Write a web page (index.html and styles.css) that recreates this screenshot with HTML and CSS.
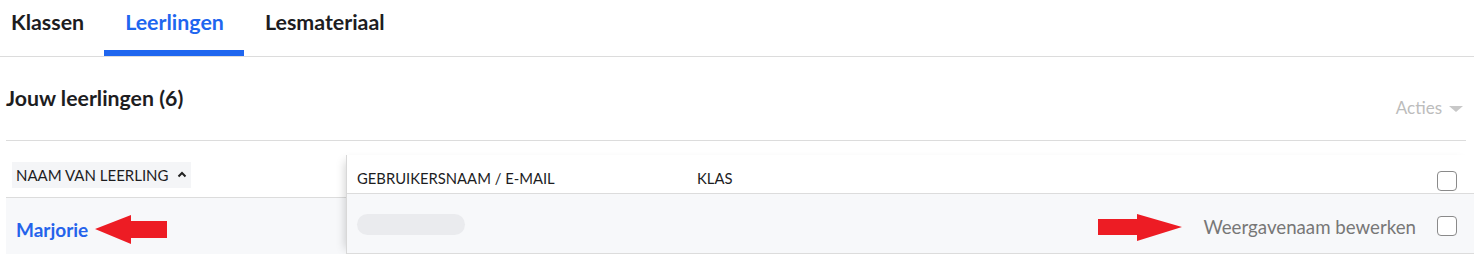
FILE: index.html
```html
<!DOCTYPE html>
<html lang="nl">
<head>
<meta charset="utf-8">
<title>Leerlingen</title>
<link rel="stylesheet" href="styles.css">
</head>
<body>
<nav class="tabs">
  <a class="tab first">Klassen</a>
  <a class="tab active">Leerlingen</a>
  <a class="tab">Lesmateriaal</a>
</nav>
<main class="page">
  <div class="head">
    <h1 class="title">Jouw leerlingen (6)</h1>
    <div class="actions">Acties <span class="caret"></span></div>
  </div>
  <div class="table">
    <div class="fixed">
      <div class="fixed-head">
        <span class="sort">NAAM VAN LEERLING
          <svg class="chev" width="10" height="7" viewBox="0 0 10 7"><path d="M1.5 5.5 L5 2 L8.5 5.5" fill="none" stroke="#222" stroke-width="2"/></svg>
        </span>
      </div>
      <div class="fixed-row">
        <a class="name">Marjorie</a>
        <svg class="arrow-left" width="72" height="29" viewBox="0 0 72 29"><polygon points="0,14 36,0 36,6 72,6 72,23 36,23 36,29" fill="#ed1c24"/></svg>
      </div>
    </div>
    <div class="scroll">
      <div class="scroll-head">
        <div class="col-user">GEBRUIKERSNAAM / E-MAIL</div>
        <div class="col-klas">KLAS</div>
        <div class="col-fill"></div>
        <span class="check"></span>
      </div>
      <div class="scroll-row">
        <div class="col-user"><span class="blur"></span></div>
        <div class="col-fill edit">
          <svg class="arrow-right" width="84" height="27" viewBox="0 0 84 27"><polygon points="0,5 39,5 39,0 84,13 39,27 39,21 0,21" fill="#ed1c24"/></svg>
          <span class="edit-text">Weergavenaam bewerken</span>
        </div>
        <span class="check"></span>
      </div>
    </div>
  </div>
</main>
</body>
</html>
```
FILE: styles.css
```css
* { box-sizing: border-box; }
html, body { margin: 0; padding: 0; background: #fff; }
body {
  font-family: Lato, "Open Sans", "Liberation Sans", sans-serif;
  color: #222;
  overflow: hidden;
}

.tabs {
  display: flex;
  height: 57px;
  border-bottom: 1px solid #dcdcdc;
}
.tab {
  display: flex;
  align-items: center;
  padding: 4px 20px 10px 21px;
  height: 56px;
  font-size: 21.4px;
  font-weight: 700;
  color: #1d1d1f;
  border-bottom: 6px solid transparent;
}
.tab.first { padding-left: 11px; padding-right: 20px; }
.tab.active {
  color: #1f66ef;
  border-bottom-color: #1f66ef;
}

.page { padding: 0 8px 0 6px; }

.head {
  display: flex;
  justify-content: space-between;
  align-items: flex-start;
  height: 84px;
  border-bottom: 1px solid #dcdcdc;
}
.title {
  margin: 28px 0 0;
  font-size: 21.3px;
  line-height: 26px;
  font-weight: 700;
  color: #1d1d1f;
}
.actions {
  margin: 41px 3px 0 0;
  font-size: 17px;
  line-height: 20px;
  color: #bcbcbc;
  display: flex;
  align-items: center;
  gap: 7px;
}
.caret {
  width: 0; height: 0;
  border-left: 7px solid transparent;
  border-right: 7px solid transparent;
  border-top: 6px solid #c8c8c8;
  margin-top: 2px;
}

.table {
  display: flex;
  margin-right: -8px;
}
.fixed { width: 340px; flex: none; }
.fixed-head {
  padding: 21px 0 0 6px;
  height: 57px;
  border-bottom: 1px solid #dcdcdc;
}
.sort {
  display: inline-flex;
  align-items: center;
  gap: 8px;
  height: 26px;
  padding: 0 4px;
  background: #f4f5f7;
  font-size: 15px;
  color: #1d1d1f;
}
.chev { margin-top: -1px; }
.fixed-row {
  display: flex;
  align-items: center;
  height: 57px;
  padding: 0 0 0 10px;
  background: #f7f8fa;
}
.name {
  font-size: 19px;
  font-weight: 700;
  color: #2563eb;
  margin-top: 5px;
}
.arrow-left { margin-left: 7px; margin-top: 5px; }

.scroll {
  flex: 1;
  margin-top: 14px;
  border-left: 1px solid #d8d8d8;
  box-shadow: -7px 0 9px -6px rgba(0,0,0,0.18);
}
.scroll-head {
  display: flex;
  align-items: center;
  height: 39px;
  border-bottom: 1px solid #dcdcdc;
  font-size: 14.8px;
  color: #1d1d1f;
  padding: 0 17px 0 10px;
}
.scroll-head .col-user, .scroll-head .col-klas { margin-top: 7px; }
.scroll-head .check { margin-top: 13px; }
.col-user { width: 340px; flex: none; }
.col-klas { width: 120px; flex: none; }
.col-fill { flex: 1; }
.check {
  width: 20px; height: 20px; flex: none;
  border: 1px solid #8a8a8a;
  border-radius: 4px;
  background: #fff;
}
.scroll-row {
  display: flex;
  align-items: center;
  height: 60px;
  border-bottom: 1px solid #dcdcdc;
  background: #f7f8fa;
  padding: 0 17px 0 10px;
}
.blur {
  display: block;
  width: 108px;
  height: 21px;
  border-radius: 11px;
  background: #eaebee;
  margin-top: 2px;
}
.edit {
  display: flex;
  justify-content: flex-end;
  align-items: center;
  gap: 21px;
  padding-right: 21px;
}
.arrow-right { margin-top: 7px; }
.edit-text {
  font-size: 18.7px;
  color: #777;
  margin-top: 6px;
}
.scroll-row .check { margin-top: 4px; }
```
